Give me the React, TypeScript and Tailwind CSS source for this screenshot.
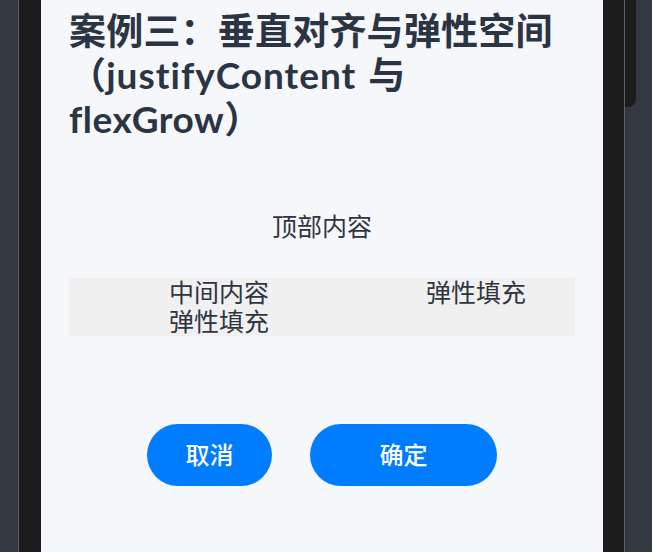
import React from "react";

const font = { fontFamily: '"Noto Sans", "Noto Sans CJK SC", sans-serif' };
const titleFont = { fontFamily: 'Lato, "Noto Sans CJK SC", sans-serif' };

export default function App() {
  return (
    <div className="w-[652px] h-[552px] bg-[#333842] flex overflow-hidden" style={font}>
      <div className="w-[18px] shrink-0" />
      <div className="w-[1px] shrink-0 bg-[#5e6066]" />
      <div className="w-[22px] shrink-0 bg-[#1c1c1c]" />
      <div className="w-[562px] shrink-0 bg-[#f5f7fb] px-[28px] flex flex-col text-[#2b3442]">
        <h1 className="pt-[9px] text-[37px] leading-[44px] font-bold tracking-[0.2px]" style={titleFont}>
          案例三：垂直对齐与弹性空间
          <br />
          （<span className="tracking-[1px] [word-spacing:2px]">justifyContent </span>与
          <br />
          <span className="tracking-[0.5px]">flexGrow</span>）
        </h1>
        <div className="mt-[70px] text-center text-[25px] leading-[30px] text-[#2f3540]">顶部内容</div>
        <div className="mt-[37px] h-[58px] bg-[#f0f0f0] flex items-start text-[25px] leading-[29px] text-[#2f3540]">
          <div className="ml-[100px] w-[104px]">中间内容弹性填充</div>
          <div className="ml-auto mr-[49px]">弹性填充</div>
        </div>
        <div className="mt-[88px] flex justify-center gap-[38px]">
          <button className="w-[125px] h-[62px] rounded-full bg-[#007dff] text-white text-[24px] font-medium">取消</button>
          <button className="w-[187px] h-[62px] rounded-full bg-[#007dff] text-white text-[24px] font-medium">确定</button>
        </div>
      </div>
      <div className="w-[21px] shrink-0 bg-[#1c1c1c]" />
      <div className="w-[1px] shrink-0 bg-[#5e6066]" />
      <div className="flex-1">
        <div className="w-[11px] h-[107px] bg-[#1c1c1c] rounded-br-[8px]" />
      </div>
    </div>
  );
}
